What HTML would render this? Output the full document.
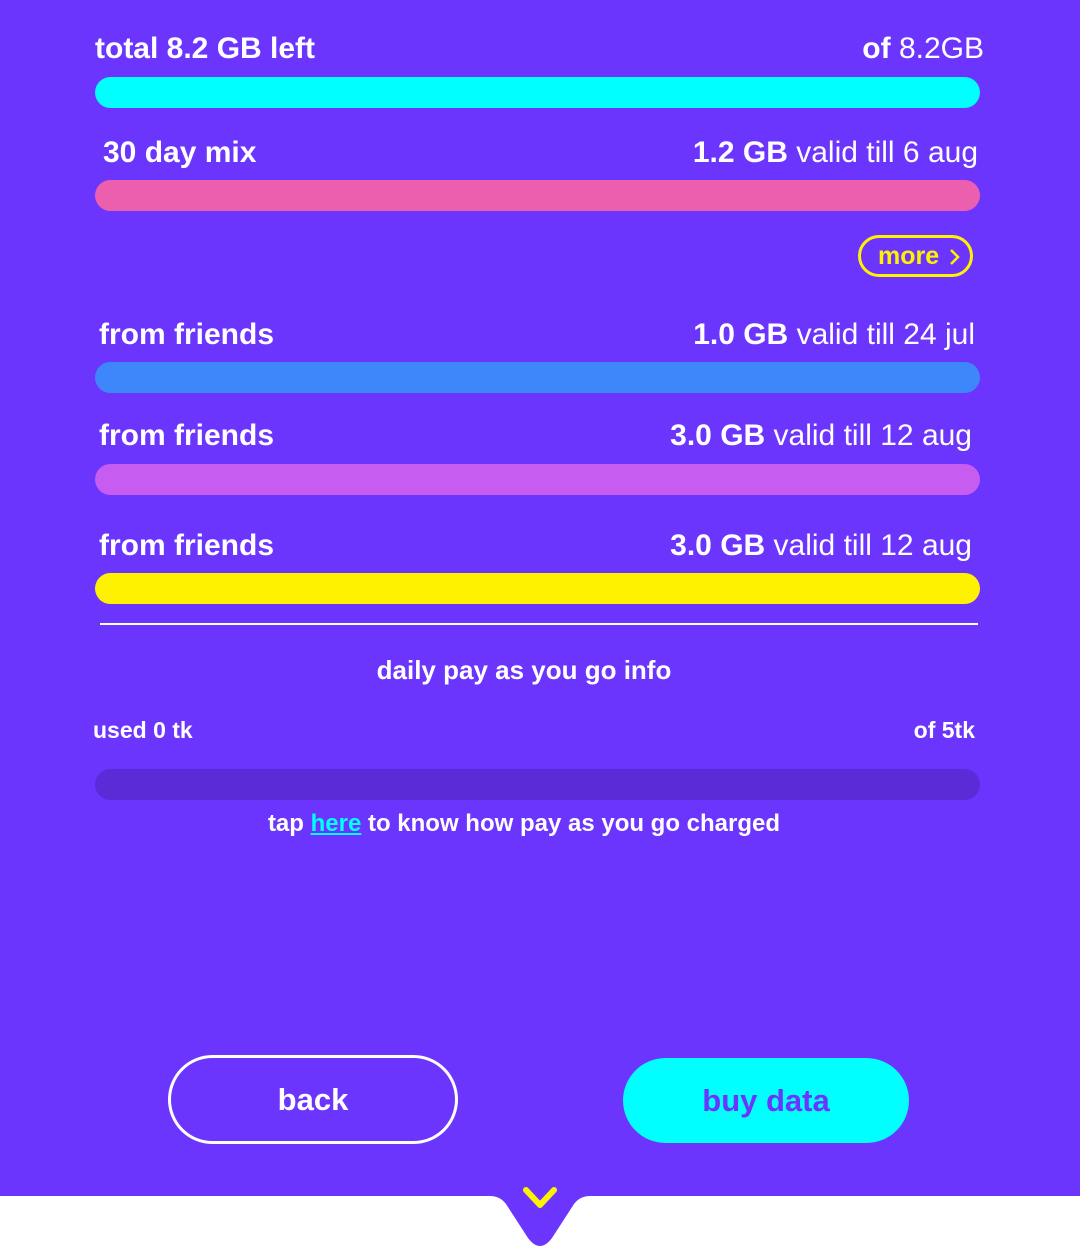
<!DOCTYPE html>
<html><head><meta charset="utf-8"><style>
*{margin:0;padding:0;box-sizing:border-box}
body{width:1080px;height:1249px;background:#fff;font-family:"Liberation Sans",sans-serif;color:#fff;position:relative;overflow:hidden}
#bg{position:absolute;left:0;top:0;width:1080px;height:1196px;background:#6c35fe}
.t{position:absolute;font-size:30px;white-space:nowrap}
.b{font-weight:bold}
.bar{position:absolute;left:95px;width:885px;height:31px;border-radius:16px}
</style></head><body>
<div id="bg"></div>
<svg style="position:absolute;left:0;top:1180px" width="1080" height="70"><path d="M470 16 L490 16 Q500 16 506 24 L528 58 Q540 74 552 58 L574 24 Q580 16 590 16 L610 16 L610 0 L470 0Z" fill="#6c35fe"/><path d="M526 10 L540 25 L554 10" fill="none" stroke="#fff200" stroke-width="6" stroke-linecap="round" stroke-linejoin="round"/></svg>

<div class="t b" style="left:95px;top:32px">total 8.2 GB left</div>
<div class="t" style="right:96px;top:32px"><b>of</b> 8.2GB</div>
<div class="bar" style="top:77px;background:#00ffff"></div>

<div class="t b" style="left:103px;top:136px">30 day mix</div>
<div class="t" style="right:102px;top:136px"><b>1.2 GB</b> valid till 6 aug</div>
<div class="bar" style="top:180px;background:#ec5fae"></div>

<div style="position:absolute;left:858px;top:235px;width:115px;height:42px;border:3px solid #fff200;border-radius:21px;color:#fff200;font-size:25px;font-weight:bold;padding-left:17px;line-height:36px">more<svg style="position:absolute;left:88px;top:11px" width="12" height="16"><path d="M2 1 L9 8 L2 15" fill="none" stroke="#fff200" stroke-width="2.5"/></svg></div>

<div class="t b" style="left:99px;top:318px">from friends</div>
<div class="t" style="right:105px;top:318px"><b>1.0 GB</b> valid till 24 jul</div>
<div class="bar" style="top:362px;background:#3d87fb"></div>

<div class="t b" style="left:99px;top:419px">from friends</div>
<div class="t" style="right:108px;top:419px"><b>3.0 GB</b> valid till 12 aug</div>
<div class="bar" style="top:464px;background:#c65cf0"></div>

<div class="t b" style="left:99px;top:529px">from friends</div>
<div class="t" style="right:108px;top:529px"><b>3.0 GB</b> valid till 12 aug</div>
<div class="bar" style="top:573px;background:#fff200"></div>

<div style="position:absolute;left:100px;top:623px;width:878px;height:2px;background:#fff"></div>
<div class="t b" style="left:0;width:1048px;text-align:center;top:655px;font-size:26px">daily pay as you go info</div>
<div class="t b" style="left:93px;top:717px;font-size:23px">used 0 tk</div>
<div class="t b" style="right:105px;top:717px;font-size:23px">of 5tk</div>
<div class="bar" style="top:769px;background:#5a2bd6"></div>
<div class="t b" style="left:0;width:1048px;text-align:center;top:810px;font-size:24px">tap <span style="color:#00ffff;text-decoration:underline">here</span> to know how pay as you go charged</div>

<div style="position:absolute;left:168px;top:1055px;width:290px;height:89px;border:3px solid #fff;border-radius:45px;text-align:center;line-height:83px;font-size:31px;font-weight:bold">back</div>
<div style="position:absolute;left:623px;top:1058px;width:286px;height:85px;background:#00ffff;border-radius:43px;text-align:center;line-height:85px;font-size:31px;font-weight:bold;color:#6c35fe">buy data</div>
</body></html>
